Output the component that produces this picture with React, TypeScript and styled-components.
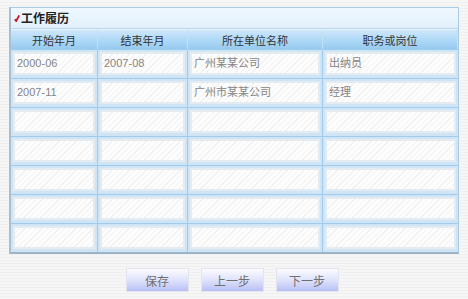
import styled, { createGlobalStyle } from "styled-components";

const GlobalStyle = createGlobalStyle`
	html, body {
		margin: 0;
		padding: 0;
	}
	body {
		width: 468px;
		height: 299px;
		overflow: hidden;
		background: repeating-linear-gradient(180deg, #f6f6f6 0px, #f6f6f6 2px, #efefef 2px, #efefef 3px);
		font-family: "Noto Sans CJK SC", "Liberation Sans", sans-serif;
	}
`;

const Page = styled.div`
	padding: 7px 9px 0 9px;
`;

const Panel = styled.div`
	width: 450px;
	box-sizing: border-box;
	border: 1px solid #a9cbe2;
	border-bottom: 2px solid #9db4c6;
	border-left: 2px solid #a9bfd0;
	background: #d4e8f7;
`;

const TitleBar = styled.div`
	height: 20px;
	display: flex;
	align-items: center;
	gap: 1px;
	padding-left: 3px;
	background: linear-gradient(180deg, #f0f8fe 0%, #e2f0fb 100%);
	border-bottom: 1px solid #b5d6ec;
	font-size: 12px;
	font-weight: bold;
	color: #222;
	line-height: 20px;
`;

const Grid = styled.div`
	display: grid;
	grid-template-columns: 87px 90px 135px 1fr;
`;

const HeadCell = styled.div`
	height: 19px;
	display: flex;
	align-items: center;
	justify-content: center;
	font-size: 11px;
	color: #333;
	background: linear-gradient(180deg, #cfe7fa 0%, #b3dbf8 45%, #97caf0 100%);
	border-top: 1px solid #e9f5fd;
	border-right: 1px solid #c4e0f4;
	&:last-child {
		border-right: none;
	}
`;

const Cell = styled.div<{ last: boolean }>`
	padding: 2px 2px 3px 2px;
	border-top: 1px solid #9fcbee;
	border-right: ${props => props.last ? "none" : "1px solid #9fcbee"};
	background: #cfe4f5;
`;

const Field = styled.div`
	height: 23px;
	box-sizing: border-box;
	border: 2px solid #e4ecf2;
	background: repeating-linear-gradient(135deg, #fdfdfd 0px, #fdfdfd 3px, #f1f1f1 3px, #f1f1f1 4px);
	font-size: 11px;
	color: #858585;
	line-height: 19px;
	padding-left: 2px;
	font-family: "Liberation Sans", "Noto Sans CJK SC", sans-serif;
	white-space: nowrap;
	overflow: hidden;
`;

const Footer = styled.div`
	display: flex;
	justify-content: center;
	gap: 12px;
	padding-top: 14px;
	padding-right: 4px;
`;

const Button = styled.button`
	width: 63px;
	height: 24px;
	box-sizing: border-box;
	border: 1px solid #e2e4ee;
	background: linear-gradient(180deg, #fbfbff 0%, #dfe3fb 50%, #b8c0f5 100%);
	font-family: "Noto Sans CJK SC", sans-serif;
	font-size: 12px;
	color: #707070;
	padding: 0;
	cursor: pointer;
`;

const Mark = () => (
	<svg width="6" height="8" viewBox="0 0 6 8">
		<path d="M0.8 5.2 L2.2 7 L5.2 1.4" stroke="#d01020" strokeWidth="1.8" fill="none" />
	</svg>
);

const headers = ["开始年月", "结束年月", "所在单位名称", "职务或岗位"];

const rows: string[][] = [
	["2000-06", "2007-08", "广州某某公司", "出纳员"],
	["2007-11", "", "广州市某某公司", "经理"],
	["", "", "", ""],
	["", "", "", ""],
	["", "", "", ""],
	["", "", "", ""],
	["", "", "", ""],
];

export default function App() {
	return (
		<>
			<GlobalStyle />
			<Page>
				<Panel>
					<TitleBar>
						<Mark />
						工作履历
					</TitleBar>
					<Grid>
						{headers.map((h) => (
							<HeadCell key={h}>{h}</HeadCell>
						))}
						{rows.map((row, i) =>
							row.map((v, j) => (
								<Cell key={`${i}-${j}`} last={j === 3}>
									<Field>{v}</Field>
								</Cell>
							))
						)}
					</Grid>
				</Panel>
				<Footer>
					<Button>保存</Button>
					<Button>上一步</Button>
					<Button>下一步</Button>
				</Footer>
			</Page>
		</>
	);
}
